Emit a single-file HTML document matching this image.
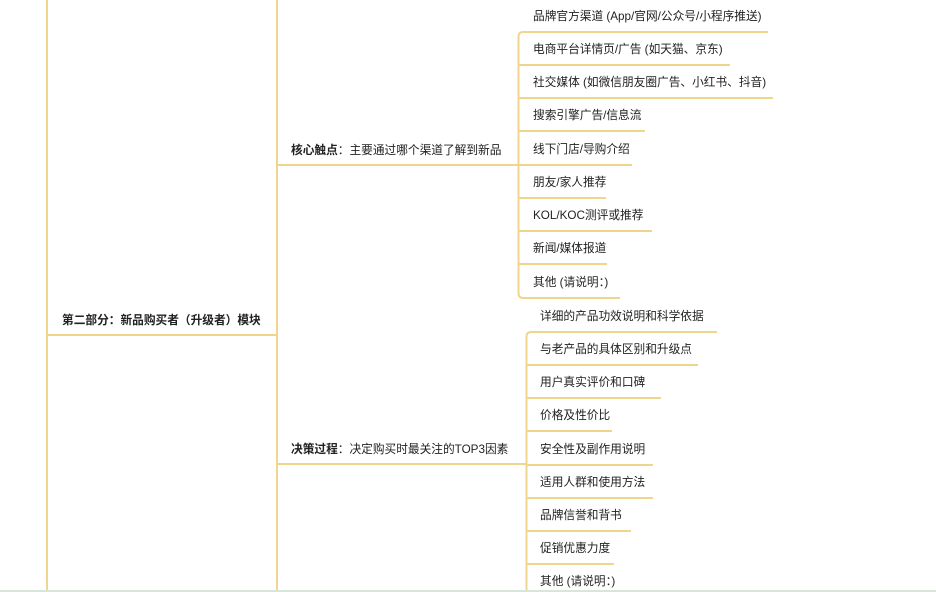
<!DOCTYPE html>
<html><head><meta charset="utf-8"><style>
html,body{margin:0;padding:0;background:#fff;width:936px;height:592px;overflow:hidden;position:relative;font-family:"Liberation Sans","Noto Sans CJK SC",sans-serif;font-size:11.7px;color:#222}
.t{position:absolute;white-space:nowrap;line-height:14px}
b{font-weight:bold}
svg{position:absolute;left:0;top:0}
</style></head><body>
<svg width="936" height="592" fill="none" stroke="#f0d68c" stroke-width="2">
<line x1="47" y1="0" x2="47" y2="592"/>
<line x1="277" y1="0" x2="277" y2="592"/>
<line x1="47" y1="335" x2="277" y2="335"/>
<line x1="277" y1="165" x2="518" y2="165"/>
<line x1="277" y1="464" x2="526" y2="464"/>
<path d="M768 32H523Q518.5 32 518.5 37V293Q518.5 298 523 298H620"/>
<line x1="518.5" y1="65" x2="730" y2="65"/>
<line x1="518.5" y1="98" x2="773" y2="98"/>
<line x1="518.5" y1="131" x2="645" y2="131"/>
<line x1="518.5" y1="165" x2="632" y2="165"/>
<line x1="518.5" y1="198" x2="606" y2="198"/>
<line x1="518.5" y1="231" x2="652" y2="231"/>
<line x1="518.5" y1="264" x2="607" y2="264"/>
<path d="M717 332H531Q526.5 332 526.5 337V592"/>
<line x1="526.5" y1="365" x2="698" y2="365"/>
<line x1="526.5" y1="398" x2="661" y2="398"/>
<line x1="526.5" y1="431" x2="612" y2="431"/>
<line x1="526.5" y1="465" x2="653" y2="465"/>
<line x1="526.5" y1="498" x2="653" y2="498"/>
<line x1="526.5" y1="531" x2="631" y2="531"/>
<line x1="526.5" y1="564" x2="614" y2="564"/>
<line x1="0" y1="591" x2="936" y2="591" stroke="#d7e6da" stroke-width="2"/>
</svg>
<div class="t" style="left:62px;top:314px"><b>第二部分：新品购买者（升级者）模块</b></div>
<div class="t" style="left:291px;top:144px"><b>核心触点</b>：主要通过哪个渠道了解到新品</div>
<div class="t" style="left:291px;top:443px"><b>决策过程</b>：决定购买时最关注的TOP3因素</div>
<div class="t" style="left:533px;top:10px">品牌官方渠道 (App/官网/公众号/小程序推送)</div>
<div class="t" style="left:533px;top:43px">电商平台详情页/广告 (如天猫、京东)</div>
<div class="t" style="left:533px;top:76px">社交媒体 (如微信朋友圈广告、小红书、抖音)</div>
<div class="t" style="left:533px;top:109px">搜索引擎广告/信息流</div>
<div class="t" style="left:533px;top:143px">线下门店/导购介绍</div>
<div class="t" style="left:533px;top:176px">朋友/家人推荐</div>
<div class="t" style="left:533px;top:209px">KOL/KOC测评或推荐</div>
<div class="t" style="left:533px;top:242px">新闻/媒体报道</div>
<div class="t" style="left:533px;top:276px">其他 (请说明：)</div>
<div class="t" style="left:540px;top:310px">详细的产品功效说明和科学依据</div>
<div class="t" style="left:540px;top:343px">与老产品的具体区别和升级点</div>
<div class="t" style="left:540px;top:376px">用户真实评价和口碑</div>
<div class="t" style="left:540px;top:409px">价格及性价比</div>
<div class="t" style="left:540px;top:443px">安全性及副作用说明</div>
<div class="t" style="left:540px;top:476px">适用人群和使用方法</div>
<div class="t" style="left:540px;top:509px">品牌信誉和背书</div>
<div class="t" style="left:540px;top:542px">促销优惠力度</div>
<div class="t" style="left:540px;top:575px">其他 (请说明：)</div>
</body></html>
